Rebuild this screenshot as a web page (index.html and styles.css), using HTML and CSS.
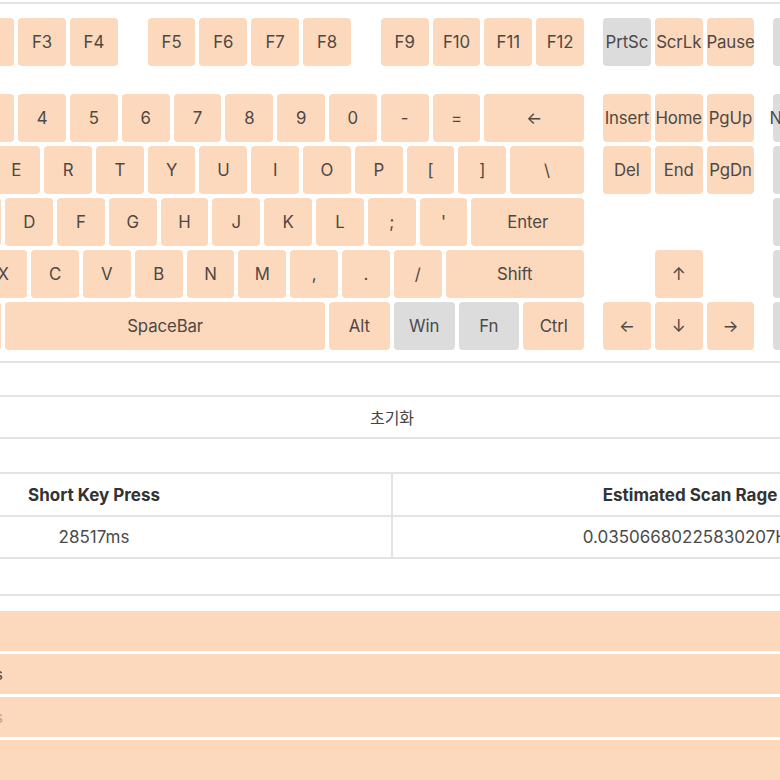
FILE: index.html
```html
<!DOCTYPE html>
<html lang="ko">
<head>
<meta charset="utf-8">
<title>Keyboard Tester</title>
<link rel="stylesheet" href="styles.css">
</head>
<body>
<div class="page">
  <div class="keyboard">
    <div class="section main">
      <div class="row frow">
        <div class="key">Esc</div><div class="sp w1"></div>
        <div class="key">F1</div><div class="key">F2</div><div class="key">F3</div><div class="key">F4</div>
        <div class="sp w05"></div>
        <div class="key">F5</div><div class="key">F6</div><div class="key">F7</div><div class="key">F8</div>
        <div class="sp w05"></div>
        <div class="key">F9</div><div class="key">F10</div><div class="key">F11</div><div class="key">F12</div>
      </div>
      <div class="row">
        <div class="key">`</div><div class="key">1</div><div class="key">2</div><div class="key">3</div><div class="key">4</div><div class="key">5</div><div class="key">6</div><div class="key">7</div><div class="key">8</div><div class="key">9</div><div class="key">0</div><div class="key">-</div><div class="key">=</div><div class="key w2">←</div>
      </div>
      <div class="row">
        <div class="key w15">Tab</div><div class="key">Q</div><div class="key">W</div><div class="key">E</div><div class="key">R</div><div class="key">T</div><div class="key">Y</div><div class="key">U</div><div class="key">I</div><div class="key">O</div><div class="key">P</div><div class="key">[</div><div class="key">]</div><div class="key w15">\</div>
      </div>
      <div class="row">
        <div class="key w175">Caps</div><div class="key">A</div><div class="key">S</div><div class="key">D</div><div class="key">F</div><div class="key">G</div><div class="key">H</div><div class="key">J</div><div class="key">K</div><div class="key">L</div><div class="key">;</div><div class="key">'</div><div class="key w225">Enter</div>
      </div>
      <div class="row">
        <div class="key w225">Shift</div><div class="key">Z</div><div class="key">X</div><div class="key">C</div><div class="key">V</div><div class="key">B</div><div class="key">N</div><div class="key">M</div><div class="key">,</div><div class="key">.</div><div class="key">/</div><div class="key w275">Shift</div>
      </div>
      <div class="row">
        <div class="key w125">Ctrl</div><div class="key w125">Win</div><div class="key w125">Alt</div><div class="key w625">SpaceBar</div><div class="key w125">Alt</div><div class="key w125 off">Win</div><div class="key w125 off">Fn</div><div class="key w125">Ctrl</div>
      </div>
    </div>

    <div class="section nav">
      <div class="row frow">
        <div class="key off">PrtSc</div><div class="key">ScrLk</div><div class="key">Pause</div>
      </div>
      <div class="row">
        <div class="key">Insert</div><div class="key">Home</div><div class="key">PgUp</div>
      </div>
      <div class="row">
        <div class="key">Del</div><div class="key">End</div><div class="key">PgDn</div>
      </div>
      <div class="row"><div class="sp w1"></div></div>
      <div class="row">
        <div class="sp w1"></div><div class="key">↑</div>
      </div>
      <div class="row">
        <div class="key">←</div><div class="key">↓</div><div class="key">→</div>
      </div>
    </div>

    <div class="section numpad">
      <div class="row frow">
        <div class="key off"></div><div class="key off"></div><div class="key off"></div><div class="key off"></div>
      </div>
      <div class="npgrid">
        <div class="key off">NumLk</div><div class="key off">/</div><div class="key off">*</div><div class="key off">-</div>
        <div class="key off">7</div><div class="key off">8</div><div class="key off">9</div><div class="key off span-r">+</div>
        <div class="key off">4</div><div class="key off">5</div><div class="key off">6</div>
        <div class="key off">1</div><div class="key off">2</div><div class="key off">3</div><div class="key off span-r">Enter</div>
        <div class="key off span-c">0</div><div class="key off">.</div>
      </div>
    </div>
  </div>

  <button class="reset" type="button">초기화</button>

  <table class="stats">
    <thead>
      <tr><th>Short Key Press</th><th>Estimated Scan Rage</th></tr>
    </thead>
    <tbody>
      <tr><td>28517ms</td><td>0.03506680225830207Hz</td></tr>
    </tbody>
  </table>

  <div class="log">
    <div class="log-row"><span class="log-cell"></span></div>
    <div class="log-row"><span class="log-cell">28517ms</span></div>
    <div class="log-row"><span class="log-cell faint">28517ms</span></div>
    <div class="log-row"><span class="log-cell"></span></div>
  </div>
</div>
</body>
</html>
```

FILE: styles.css
```css
html, body {
  margin: 0;
  padding: 0;
  overflow: hidden;
  background: #ffffff;
}

body {
  font-family: Inter, "Noto Sans CJK KR", "Noto Sans", sans-serif;
  color: #444;
}

.page {
  --u: 51.8px;
  width: 1194px;
  margin-left: -205px;
  padding-top: 2px;
}

/* keyboard */
.keyboard {
  display: flex;
  gap: 19px;
  border: 2px solid #e3e3e3;
  padding: 14px 14px 11px 14px;
}

.section {
  display: flex;
  flex-direction: column;
  gap: 4px;
}

.row {
  display: flex;
  gap: 4px;
  height: 48px;
}

.frow {
  margin-bottom: 24px;
}

.key {
  box-sizing: border-box;
  flex: none;
  width: calc(var(--u) - 4px);
  height: 48px;
  background: #fcd9bc;
  border-radius: 4px;
  display: flex;
  align-items: center;
  justify-content: center;
  font-size: 16.8px;
  color: #4e4844;
  white-space: nowrap;
  letter-spacing: -0.1px;
}

.key.off {
  background: #dcdcdc;
  color: #4a4a4a;
}

.sp {
  flex: none;
  height: 48px;
}

.w05 { width: calc(var(--u) * 0.5 - 4px); }
.w1 { width: calc(var(--u) - 4px); }
.w125 { width: calc(var(--u) * 1.25 - 4px); }
.w15 { width: calc(var(--u) * 1.5 - 4px); }
.w175 { width: calc(var(--u) * 1.75 - 4px); }
.w2 { width: calc(var(--u) * 2 - 4px); }
.w225 { width: calc(var(--u) * 2.25 - 4px); }
.w275 { width: calc(var(--u) * 2.75 - 4px); }
.w625 { width: calc(var(--u) * 6.25 - 4px); }

.npgrid {
  display: grid;
  grid-template-columns: repeat(4, calc(var(--u) - 4px));
  grid-auto-rows: 48px;
  gap: 4px;
}

.npgrid .key {
  width: auto;
  height: auto;
}

.span-r { grid-row: span 2; }
.span-c { grid-column: span 2; }

/* reset button */
.reset {
  display: block;
  box-sizing: border-box;
  width: 100%;
  height: 44px;
  margin: 32px 0 0 0;
  background: #ffffff;
  border: 2px solid #e3e3e3;
  border-radius: 0;
  font-family: Inter, "Noto Sans CJK KR", sans-serif;
  font-size: 16px;
  color: #444;
  padding: 0;
}

/* stats table */
.stats {
  width: 100%;
  margin-top: 33px;
  border-collapse: collapse;
  table-layout: fixed;
}

.stats th,
.stats td {
  border: 2px solid #e3e3e3;
  text-align: center;
  font-size: 17px;
  padding: 0;
}

.stats th {
  height: 41px;
  font-weight: 700;
  color: #333;
}

.stats td {
  height: 40px;
  color: #4a4a4a;
}

/* log list */
.log {
  margin-top: 35px;
  border-top: 2px solid #e3e3e3;
  padding-top: 15px;
  display: flex;
  flex-direction: column;
  gap: 3px;
}

.log-row {
  height: 40px;
  background: #fcd9bc;
  display: flex;
  align-items: center;
}

.log-cell {
  width: 208px;
  text-align: right;
  font-size: 16px;
  color: #4a4a4a;
}

.log-cell.faint {
  color: #b9a596;
}
```
